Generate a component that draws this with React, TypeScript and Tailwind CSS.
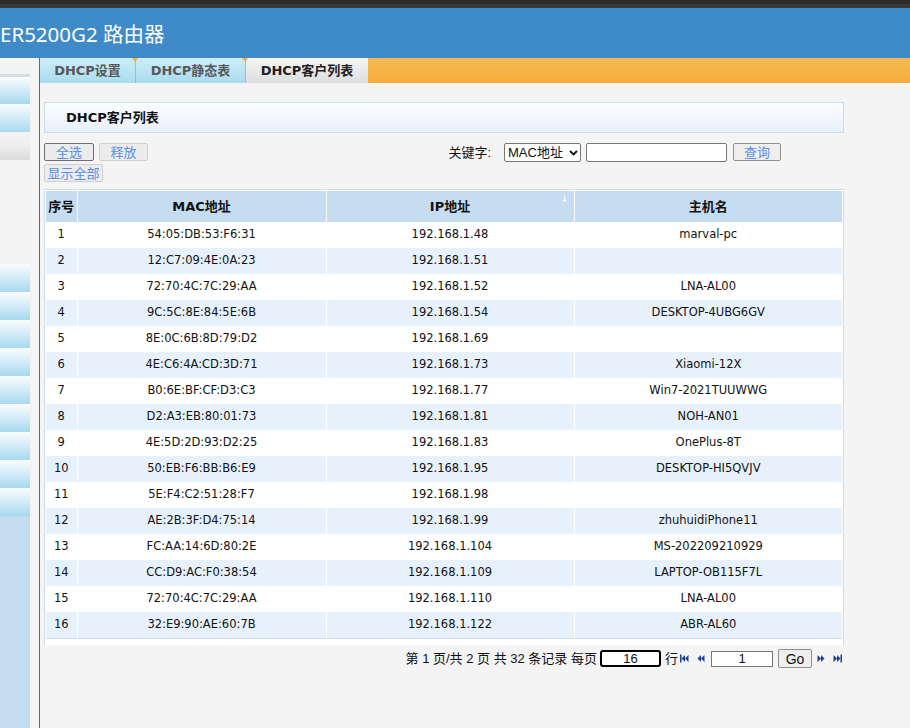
import React from 'react'

// DHCP client list page of a router admin UI

const rows: [string, string, string][] = [
  ['54:05:DB:53:F6:31', '192.168.1.48', 'marval-pc'],
  ['12:C7:09:4E:0A:23', '192.168.1.51', ''],
  ['72:70:4C:7C:29:AA', '192.168.1.52', 'LNA-AL00'],
  ['9C:5C:8E:84:5E:6B', '192.168.1.54', 'DESKTOP-4UBG6GV'],
  ['8E:0C:6B:8D:79:D2', '192.168.1.69', ''],
  ['4E:C6:4A:CD:3D:71', '192.168.1.73', 'Xiaomi-12X'],
  ['B0:6E:BF:CF:D3:C3', '192.168.1.77', 'Win7-2021TUUWWG'],
  ['D2:A3:EB:80:01:73', '192.168.1.81', 'NOH-AN01'],
  ['4E:5D:2D:93:D2:25', '192.168.1.83', 'OnePlus-8T'],
  ['50:EB:F6:BB:B6:E9', '192.168.1.95', 'DESKTOP-HI5QVJV'],
  ['5E:F4:C2:51:28:F7', '192.168.1.98', ''],
  ['AE:2B:3F:D4:75:14', '192.168.1.99', 'zhuhuidiPhone11'],
  ['FC:AA:14:6D:80:2E', '192.168.1.104', 'MS-202209210929'],
  ['CC:D9:AC:F0:38:54', '192.168.1.109', 'LAPTOP-OB115F7L'],
  ['72:70:4C:7C:29:AA', '192.168.1.110', 'LNA-AL00'],
  ['32:E9:90:AE:60:7B', '192.168.1.122', 'ABR-AL60'],
]

const uiFont = "font-['Liberation_Sans','Noto_Sans_CJK_SC',sans-serif]"
const tblFont = "font-['DejaVu_Sans','Noto_Sans_CJK_SC',sans-serif]"

function SideItem({ first }: { first?: boolean }) {
  return (
    <div
      className={`w-[30px] h-[28px] bg-gradient-to-b from-[#fbfdff] to-[#a6d9ee] ${first ? 'h-[30px] border-t-[3px] border-[#d3dfe8]' : ''}`}
    />
  )
}

function PageIcon({ dir, bar }: { dir: 'l' | 'r'; bar?: boolean }) {
  return (
    <svg width={bar ? 9 : 8} height="9" viewBox={bar ? '0 0 9 9' : '0 0 8 9'} className="shrink-0">
      {dir === 'l' ? (
        <g fill="#1d3f9e">
          {bar && <rect x="0" y="0.5" width="1.5" height="8" />}
          <polygon points={bar ? '1.5,4.5 5,1 5,8' : '0.5,4.5 4,1 4,8'} />
          <polygon points={bar ? '5,4.5 8.5,1 8.5,8' : '4,4.5 7.5,1 7.5,8'} />
        </g>
      ) : (
        <g fill="#1d3f9e">
          <polygon points="0.5,1 4,4.5 0.5,8" />
          <polygon points="4,1 7.5,4.5 4,8" />
          {bar && <rect x="7.5" y="0.5" width="1.5" height="8" />}
        </g>
      )}
    </svg>
  )
}

function Tab({ label, w, active, notch }: { label: string; w: string; active?: boolean; notch?: boolean }) {
  return (
    <div
      className={[
        'relative flex items-center justify-center h-full text-[13px] font-bold',
        w,
        tblFont,
        active
          ? 'bg-gradient-to-b from-[#f6f6f6] to-[#dcdddf] text-[#1e1e1e]'
          : 'bg-gradient-to-b from-[#cdedf8] to-[#a9dcee] text-[#585858]',
        notch ? 'border-l border-[#f4ad3d]' : '',
      ].join(' ')}
    >
      {notch && (
        <span className="absolute -left-[4px] top-0 w-0 h-0 border-l-[3px] border-r-[3px] border-t-[4px] border-l-transparent border-r-transparent border-t-[#f4ad3d]" />
      )}
      {label}
    </div>
  )
}

function Btn({ children, w, focused }: { children: React.ReactNode; w: string; focused?: boolean }) {
  return (
    <button
      type="button"
      className={`h-[18px] ${w} rounded-[2px] border ${focused ? 'border-[#6f6f6f]' : 'border-[#cfcfcf]'} bg-[#ececec] text-[13px] leading-none text-[#5a8de6] ${uiFont}`}
    >
      {children}
    </button>
  )
}

export default function App() {
  return (
    <div className="w-[910px] h-[728px] overflow-hidden bg-[#f4f4f4] flex flex-col">
      {/* window chrome strip */}
      <div className="h-[4px] bg-[#2b2b2b]" />
      <div className="h-[4px] bg-[#393939]" />

      {/* header */}
      <header className="h-[50px] bg-[#3f8ac9] flex items-center pt-[3px]">
        <h1 className={`text-[20.5px] text-white leading-none font-['Noto_Sans','Noto_Sans_CJK_SC',sans-serif]`}>
          ER5200G2 路由器
        </h1>
      </header>

      <div className="flex flex-1 min-h-0">
        {/* sidebar */}
        <aside className="w-[39px] shrink-0 flex flex-col pt-[16px]">
          <SideItem first />
          <SideItem />
          <div className="w-[30px] h-[28px] bg-gradient-to-b from-[#f3f3f3] via-[#eeeeee] to-[#d9dadb]" />
          <div className="h-[104px]" />
          {Array.from({ length: 9 }).map((_, i) => (
            <SideItem key={i} />
          ))}
          <div className="w-[30px] flex-1 bg-[#c5dbef]" />
        </aside>
        <div className="w-px bg-[#2f6fd1] shrink-0" />

        {/* main */}
        <main className="flex-1 flex flex-col">
          <nav className="h-[25px] flex bg-gradient-to-b from-[#f8b954] to-[#f6ae3a]">
            <Tab label="DHCP设置" w="w-[95px]" />
            <Tab label="DHCP静态表" w="w-[110px]" notch />
            <Tab label="DHCP客户列表" w="w-[123px]" active notch />
          </nav>

          <div className="w-[800px] ml-[4px] pt-[19px] flex flex-col">
            <div className="h-[31px] border border-[#c6dcf0] bg-gradient-to-b from-[#fbfcff] to-[#e9f0fb] flex items-center pl-[21px]">
              <span className={`text-[13px] font-bold text-[#111] ${tblFont}`}>DHCP客户列表</span>
            </div>

            <div className="flex mt-[10px]">
              <div className="flex flex-col gap-[3px]">
                <div className="flex gap-[5px]">
                  <Btn w="w-[50px]" focused>全选</Btn>
                  <Btn w="w-[49px]">释放</Btn>
                </div>
                <Btn w="w-[59px]">显示全部</Btn>
              </div>
              <div className={`flex items-start gap-[5px] ml-auto mr-[63px] ${uiFont}`}>
                <span className="text-[13px] text-[#111] leading-[19px] mr-[8px]">关键字:</span>
                <div className="h-[19px] w-[77px] border border-[#767676] rounded-[2px] bg-white flex items-center pl-[3px] text-[13px] text-[#111] leading-none">
                  MAC地址
                  <svg width="9" height="6" viewBox="0 0 9 6" className="ml-auto mr-[2px]">
                    <path d="M1 1l3.5 3.5L8 1" stroke="#111" strokeWidth="1.8" fill="none" />
                  </svg>
                </div>
                <div className="h-[19px] w-[141px] border border-[#767676] rounded-[2px] bg-white" />
                <button
                  type="button"
                  className="h-[18px] w-[48px] ml-[1px] rounded-[2px] border border-[#8f8f8f] bg-[#efefef] text-[13px] leading-none text-[#5a8de6]"
                >
                  查询
                </button>
              </div>
            </div>

            {/* table */}
            <div className="mt-[7px] border border-[#cfdeec] border-b-0 bg-white px-px pt-px pb-[6px]">
              <table className={`w-full table-fixed border-collapse text-[11.5px] text-[#111] ${tblFont}`}>
                <colgroup>
                  <col className="w-[31px]" />
                  <col className="w-[249px]" />
                  <col className="w-[248px]" />
                  <col />
                </colgroup>
                <thead>
                  <tr className="h-[31px] bg-[#c6dcf0] text-[13px] font-bold">
                    <th className="border-r border-white">序号</th>
                    <th className="border-r border-white">MAC地址</th>
                    <th className="border-r border-white relative">
                      IP地址
                      <span className="absolute right-[5px] top-[2px] text-[9px] text-white font-bold">↓</span>
                    </th>
                    <th>主机名</th>
                  </tr>
                </thead>
                <tbody>
                  {rows.map(([mac, ip, host], i) => (
                    <tr
                      key={i}
                      className={`h-[26px] text-center ${i % 2 ? 'bg-[#e7f1fc]' : 'bg-white'} ${i === rows.length - 1 ? 'border-b border-[#c9dcec]' : ''}`}
                    >
                      <td className="border-r border-white">{i + 1}</td>
                      <td className="border-r border-white">{mac}</td>
                      <td className="border-r border-white">{ip}</td>
                      <td>{host}</td>
                    </tr>
                  ))}
                </tbody>
              </table>
            </div>

            {/* pagination */}
            <div className={`flex items-center justify-end mt-[4px] h-[20px] pr-[2px] text-[13px] text-[#111] ${uiFont}`}>
              <span className="mr-[3px]">第 1 页/共 2 页 共 32 条记录 每页</span>
              <div className="h-[17px] w-[61px] border-2 border-black rounded-[3px] bg-white text-center leading-[13px]">16</div>
              <span className="ml-[4px] mr-[2px]">行</span>
              <PageIcon dir="l" bar />
              <span className="w-[8px]" />
              <PageIcon dir="l" />
              <div className="ml-[6px] h-[16px] w-[62px] border border-[#767676] bg-white text-center leading-[14px]">1</div>
              <button
                type="button"
                className="ml-[5px] h-[19px] w-[34px] rounded-[2px] border border-[#8f8f8f] bg-[#efefef] text-[14px] leading-none"
              >
                Go
              </button>
              <span className="w-[5px]" />
              <PageIcon dir="r" />
              <span className="w-[8px]" />
              <PageIcon dir="r" bar />
            </div>
          </div>
        </main>
      </div>
    </div>
  )
}
